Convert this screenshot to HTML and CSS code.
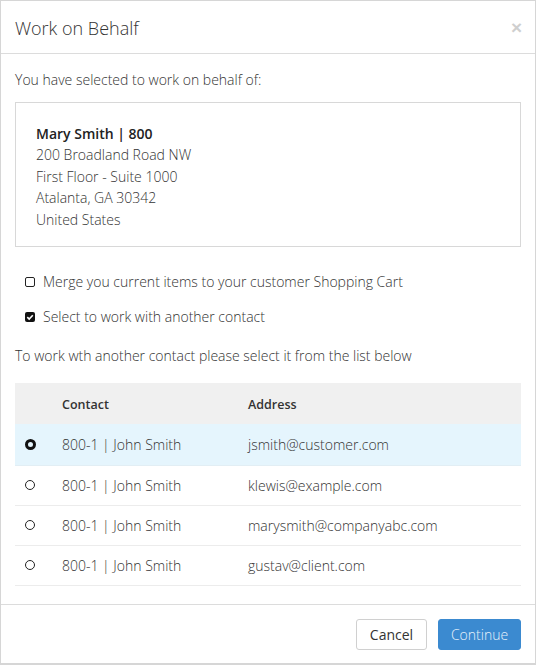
FILE: index.html
```html
<!DOCTYPE html>
<html>
<head>
<meta charset="utf-8">
<link rel="stylesheet" href="styles.css">
</head>
<body>
<div class="modal">
  <div class="modal-header">
    <h4 class="modal-title">Work on Behalf</h4>
    <span class="close">&times;</span>
  </div>
  <div class="modal-body">
    <p class="intro">You have selected to work on behalf of:</p>
    <div class="address-box">
      <div class="name">Mary Smith | 800</div>
      <div class="line">200 Broadland Road NW</div>
      <div class="line">First Floor - Suite 1000</div>
      <div class="line">Atalanta, GA 30342</div>
      <div class="line">United States</div>
    </div>
    <div class="check-row">
      <span class="checkbox"></span>
      <span>Merge you current items to your customer Shopping Cart</span>
    </div>
    <div class="check-row">
      <span class="checkbox checked"><svg viewBox="0 0 10 10" width="10" height="10"><rect x="0" y="0" width="10" height="10" rx="2" fill="#111"/><path d="M2.3 5.1 L4.2 7 L7.8 3.2" stroke="#fff" stroke-width="1.6" fill="none"/></svg></span>
      <span>Select to work with another contact</span>
    </div>
    <p class="hint">To work wth another contact please select it from the list below</p>
    <table class="contacts">
      <thead>
        <tr><th class="sel"></th><th class="c-contact">Contact</th><th>Address</th></tr>
      </thead>
      <tbody>
        <tr class="active"><td class="sel"><span class="radio on"></span></td><td>800-1 | John Smith</td><td>jsmith@customer.com</td></tr>
        <tr><td class="sel"><span class="radio"></span></td><td>800-1 | John Smith</td><td>klewis@example.com</td></tr>
        <tr><td class="sel"><span class="radio"></span></td><td>800-1 | John Smith</td><td>marysmith@companyabc.com</td></tr>
        <tr><td class="sel"><span class="radio"></span></td><td>800-1 | John Smith</td><td>gustav@client.com</td></tr>
      </tbody>
    </table>
  </div>
  <div class="modal-footer">
    <button class="btn btn-default">Cancel</button>
    <button class="btn btn-primary">Continue</button>
  </div>
</div>
</body>
</html>
```
FILE: styles.css
```css
* { box-sizing: border-box; }
html, body { margin: 0; padding: 0; background: #fff; }
body {
  font-family: "Open Sans", "Liberation Sans", sans-serif;
  font-weight: 300;
  font-size: 14px;
  color: #333;
}
.modal {
  width: 536px;
  height: 665px;
  border: 1px solid #d6d6d6;
  border-bottom-width: 2px;
  display: flex;
  flex-direction: column;
}
.modal-header {
  height: 53px;
  border-bottom: 1px solid #dcdcdc;
  display: flex;
  align-items: center;
  justify-content: space-between;
  padding: 0 14px;
}
.modal-title {
  margin: 0;
  font-size: 18px;
  font-weight: 300;
  color: #333;
  padding-top: 1px;
}
.close {
  font-size: 19px;
  font-weight: 700;
  color: #cfcfcf;
  line-height: 1;
  font-family: "Liberation Sans", sans-serif;
  margin-top: 0;
  margin-right: -1px;
}
.modal-body {
  flex: 1;
  padding: 16px 14px 0 14px;
}
.intro {
  margin: 0 0 12px 0;
  line-height: 20px;
}
.address-box {
  border: 1px solid #d8d8d8;
  padding: 20px 20px 16px 20px;
  line-height: 21.4px;
}
.name {
  font-weight: 600;
  color: #222;
}
.check-row {
  display: flex;
  align-items: center;
  gap: 8px;
  padding-left: 10px;
  line-height: 20px;
}
.address-box + .check-row { margin-top: 25px; }
.check-row + .check-row { margin-top: 15px; }
.checkbox {
  width: 10px;
  height: 10px;
  border: 1px solid #222;
  border-radius: 2px;
  display: inline-block;
  flex: none;
}
.checkbox.checked { border: none; }
.checkbox svg { display: block; }
.hint {
  margin: 19px 0 17px 0;
  line-height: 20px;
}
.contacts {
  width: 100%;
  border-collapse: collapse;
}
.contacts th {
  background: #f0f0f0;
  text-align: left;
  font-weight: 600;
  font-size: 12.5px;
  color: #333;
  height: 41px;
  padding: 1px 0 0 0;
}
.contacts td {
  height: 40px;
  padding: 0;
  border-bottom: 1px solid #ececec;
  vertical-align: middle;
}
.contacts tbody tr:first-child td { height: 41px; padding-top: 1px; }
.contacts .sel { width: 47px; padding-left: 10px; }
.contacts .c-contact { width: 186px; }
.contacts tr.active td { background: #e5f5fd; border-bottom-color: #e2eef4; }
.radio {
  display: block;
  width: 10px;
  height: 10px;
  border: 1.3px solid #222;
  border-radius: 50%;
}
.radio.on {
  width: 11px;
  height: 11px;
  border: 3.2px solid #111;
}
.modal-footer {
  border-top: 1px solid #dcdcdc;
  padding: 14px 14px 13px 14px;
  display: flex;
  justify-content: flex-end;
  gap: 11px;
}
.btn {
  font-family: "Open Sans", "Liberation Sans", sans-serif;
  font-size: 14px;
  height: 31px;
  border-radius: 3px;
  padding: 0 11px;
  cursor: pointer;
}
.btn-default {
  background: #fff;
  border: 1px solid #d0d0d0;
  color: #333;
  font-weight: 400;
  width: 71px;
}
.btn-primary {
  background: #3b8ad0;
  border: 1px solid #3b8ad0;
  color: #e8f2fb;
  font-weight: 300;
  width: 83px;
}
```
